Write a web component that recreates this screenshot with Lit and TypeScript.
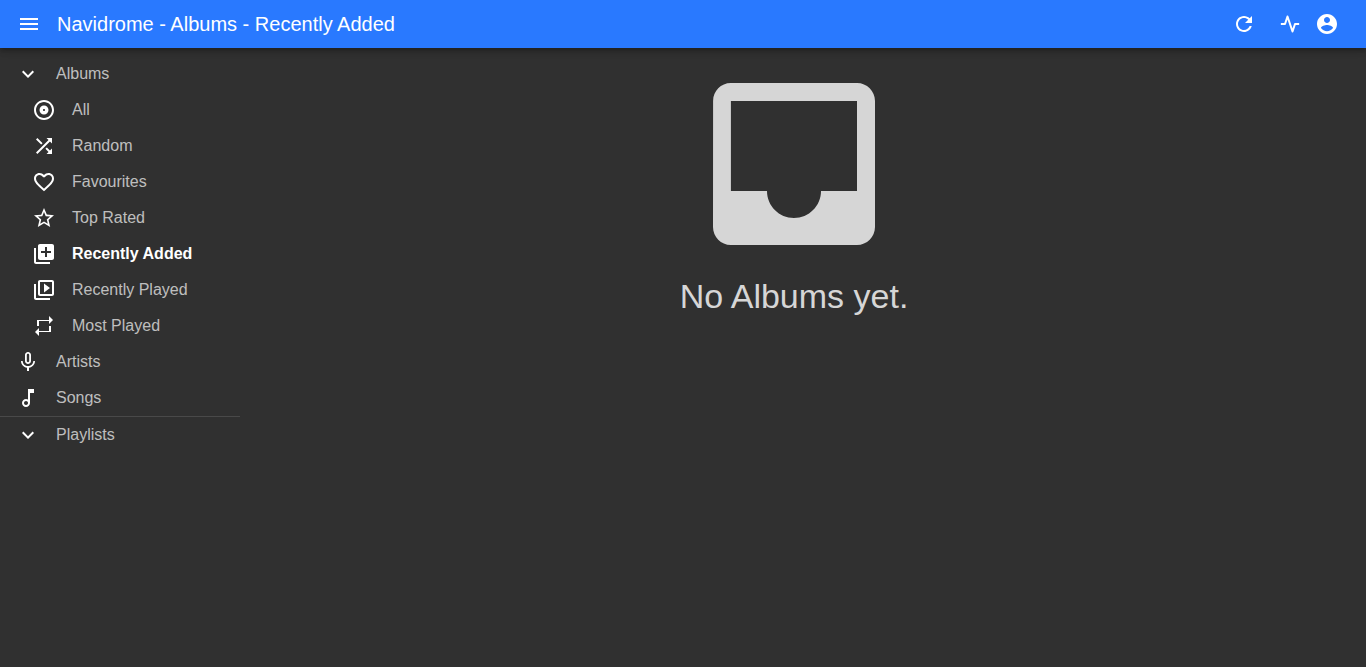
import { LitElement, html, css, svg } from "lit";
import { customElement, state } from "lit/decorators.js";
import { classMap } from "lit/directives/class-map.js";

const paths: Record<string, string> = {
  menu: "M3 18h18v-2H3v2zm0-5h18v-2H3v2zm0-7v2h18V6H3z",
  refresh:
    "M17.65 6.35C16.2 4.9 14.21 4 12 4c-4.42 0-7.99 3.58-7.99 8s3.57 8 7.99 8c3.73 0 6.84-2.55 7.73-6h-2.08c-.82 2.33-3.04 4-5.65 4-3.31 0-6-2.69-6-6s2.69-6 6-6c1.66 0 3.14.69 4.22 1.78L13 11h7V4l-2.35 2.35z",
  account:
    "M12 2C6.48 2 2 6.48 2 12s4.48 10 10 10 10-4.48 10-10S17.52 2 12 2zm0 3c1.66 0 3 1.34 3 3s-1.34 3-3 3-3-1.34-3-3 1.34-3 3-3zm0 14.2c-2.5 0-4.71-1.28-6-3.22.03-1.99 4-3.08 6-3.08 1.99 0 5.97 1.09 6 3.08-1.29 1.94-3.5 3.22-6 3.22z",
  expand: "M16.59 8.59L12 13.17 7.41 8.59 6 10l6 6 6-6z",
  album:
    "M12 2C6.48 2 2 6.48 2 12s4.48 10 10 10 10-4.48 10-10S17.52 2 12 2zm0 18c-4.41 0-8-3.59-8-8s3.59-8 8-8 8 3.59 8 8-3.59 8-8 8zm0-12.5c-2.49 0-4.5 2.01-4.5 4.5s2.01 4.5 4.5 4.5 4.5-2.01 4.5-4.5-2.01-4.5-4.5-4.5zm0 5.5c-.55 0-1-.45-1-1s.45-1 1-1 1 .45 1 1-.45 1-1 1z",
  shuffle:
    "M10.59 9.17L5.41 4 4 5.41l5.17 5.17 1.42-1.41zM14.5 4l2.04 2.04L4 18.59 5.41 20 17.96 7.46 20 9.5V4h-5.5zm.33 9.41l-1.41 1.41 3.13 3.13L14.5 20H20v-5.5l-2.04 2.04-3.13-3.13z",
  heart:
    "M16.5 3c-1.74 0-3.41.81-4.5 2.09C10.91 3.81 9.24 3 7.5 3 4.42 3 2 5.42 2 8.5c0 3.78 3.4 6.86 8.55 11.54L12 21.35l1.45-1.32C18.6 15.36 22 12.28 22 8.5 22 5.42 19.58 3 16.5 3zm-4.4 15.55l-.1.1-.1-.1C7.14 14.24 4 11.39 4 8.5 4 6.5 5.5 5 7.5 5c1.54 0 3.04.99 3.57 2.36h1.87C13.46 5.99 14.96 5 16.5 5c2 0 3.5 1.5 3.5 3.5 0 2.89-3.14 5.74-7.9 10.05z",
  star: "M22 9.24l-7.19-.62L12 2 9.19 8.63 2 9.24l5.46 4.73L5.82 21 12 17.27 18.18 21l-1.63-7.03L22 9.24zM12 15.4l-3.76 2.27 1-4.28-3.32-2.88 4.38-.38L12 6.1l1.71 4.04 4.38.38-3.32 2.88 1 4.28L12 15.4z",
  added:
    "M4 6H2v14c0 1.1.9 2 2 2h14v-2H4V6zm16-4H8c-1.1 0-2 .9-2 2v12c0 1.1.9 2 2 2h12c1.1 0 2-.9 2-2V4c0-1.1-.9-2-2-2zm-1 9h-4v4h-2v-4H9V9h4V5h2v4h4v2z",
  played:
    "M4 6H2v14c0 1.1.9 2 2 2h14v-2H4V6zm16-4H8c-1.1 0-2 .9-2 2v12c0 1.1.9 2 2 2h12c1.1 0 2-.9 2-2V4c0-1.1-.9-2-2-2zm0 14H8V4h12v12zM12 5.5v9l6-4.5z",
  repeat: "M7 7h10v3l4-4-4-4v4H5v6h2V7zm10 10H7v-3l-4 4 4 4v-4h12v-6h-2v5z",
  mic: "M12 14c1.66 0 2.99-1.34 2.99-3L15 5c0-1.66-1.34-3-3-3S9 3.34 9 5v6c0 1.66 1.34 3 3 3zm-1.2-9.1c0-.66.54-1.2 1.2-1.2.66 0 1.2.54 1.2 1.2l-.01 6.2c0 .66-.53 1.2-1.19 1.2-.66 0-1.2-.54-1.2-1.2V4.9zm6.5 6.1c0 3-2.54 5.1-5.3 5.1S6.7 14 6.7 11H5c0 3.41 2.72 6.23 6 6.72V21h2v-3.28c3.28-.48 6-3.3 6-6.72h-1.7z",
  note: "M12 3l.01 10.55c-.59-.34-1.27-.55-2-.55C7.79 13 6 14.79 6 17s1.79 4 4.01 4S14 19.21 14 17V7h4V3h-6zm-1.99 16c-1.1 0-2-.9-2-2s.9-2 2-2 2 .9 2 2-.9 2-2 2z",
  inbox:
    "M19 3H4.99c-1.11 0-1.98.89-1.98 2L3 19c0 1.1.88 2 1.99 2H19c1.1 0 2-.9 2-2V5c0-1.11-.9-2-2-2zm0 12h-4c0 1.66-1.35 3-3 3s-3-1.34-3-3H4.99V5H19v10z",
};

const icon = (name: string, cls = "icon") => html`
  <svg class=${cls} viewBox="0 0 24 24" aria-hidden="true">${svg`<path d=${paths[name]}></path>`}</svg>
`;

interface Entry {
  label: string;
  icon: string;
}

const albumLists: Entry[] = [
  { label: "All", icon: "album" },
  { label: "Random", icon: "shuffle" },
  { label: "Favourites", icon: "heart" },
  { label: "Top Rated", icon: "star" },
  { label: "Recently Added", icon: "added" },
  { label: "Recently Played", icon: "played" },
  { label: "Most Played", icon: "repeat" },
];

const libraries: Entry[] = [
  { label: "Artists", icon: "mic" },
  { label: "Songs", icon: "note" },
];

@customElement("app-root")
export class AppRoot extends LitElement {
  @state() private current = "Recently Added";
  @state() private albumsOpen = true;

  static styles = css`
    :host {
      display: flex;
      flex-direction: column;
      min-height: 100vh;
      background: #303030;
      color: #fff;
      font-family: "Liberation Sans", Arial, sans-serif;
      font-size: 16px;
      line-height: 24px;
    }
    button {
      margin: 0;
      border: 0;
      background: none;
      color: inherit;
      font: inherit;
      text-align: left;
      cursor: pointer;
    }
    .icon {
      display: block;
      flex: none;
      width: 24px;
      height: 24px;
      fill: currentColor;
    }
    .bar {
      position: relative;
      display: flex;
      align-items: center;
      height: 48px;
      padding: 0 24px 0 14px;
      background: #2979ff;
      box-shadow:
        0 2px 4px -1px rgba(0, 0, 0, 0.2),
        0 4px 5px 0 rgba(0, 0, 0, 0.14),
        0 1px 10px 0 rgba(0, 0, 0, 0.12);
    }
    .tool {
      padding: 3px;
    }
    .title {
      flex: 1;
      margin: 0 0 0 13px;
      font-size: 20px;
      font-weight: 400;
      line-height: 32px;
    }
    .tools {
      display: flex;
      align-items: center;
    }
    .refresh {
      margin-right: 18px;
    }
    .account {
      margin-left: 9px;
    }
    .activity {
      display: block;
      width: 20px;
      height: 20px;
      fill: none;
      stroke: currentColor;
      stroke-width: 2.4;
    }
    .body {
      display: flex;
      flex: 1;
    }
    .side {
      flex: none;
      width: 240px;
      padding-top: 8px;
    }
    .list {
      margin: 0;
      padding: 0;
      list-style: none;
    }
    .row {
      box-sizing: border-box;
      display: flex;
      align-items: center;
      gap: 16px;
      width: 100%;
      height: 36px;
      padding: 0 16px;
      color: #fff;
      text-decoration: none;
    }
    .nested {
      padding-left: 32px;
    }
    .label {
      color: rgba(255, 255, 255, 0.7);
    }
    .active .label {
      color: #fff;
      font-weight: 700;
    }
    .divider {
      height: 1px;
      margin: 0;
      border: 0;
      background: rgba(255, 255, 255, 0.12);
    }
    .empty {
      display: flex;
      flex: 1;
      flex-direction: column;
      align-items: center;
      margin-right: 18px;
      padding-top: 8px;
      color: #d6d6d6;
    }
    .inbox {
      display: block;
      width: 216px;
      height: 216px;
      fill: currentColor;
    }
    .message {
      margin: 0;
      font-size: 34px;
      font-weight: 400;
      line-height: 48px;
    }
  `;

  private link(entry: Entry, nested: boolean) {
    const active = entry.label === this.current;
    return html`<li>
      <a
        class=${classMap({ row: true, nested, active })}
        href="#"
        aria-current=${active ? "page" : "false"}
        @click=${(e: Event) => {
          e.preventDefault();
          this.current = entry.label;
        }}
        >${icon(entry.icon)}<span class="label">${entry.label}</span></a
      >
    </li>`;
  }

  render() {
    return html`
      <header class="bar">
        <button class="tool" aria-label="Toggle menu">${icon("menu")}</button>
        <h1 class="title">Navidrome - Albums - Recently Added</h1>
        <div class="tools">
          <button class="tool refresh" aria-label="Refresh">${icon("refresh")}</button>
          <button class="tool" aria-label="Activity">
            <svg class="activity" viewBox="0 0 24 24" stroke-linejoin="round">
              <polyline points="23 12 18 12 15 21 9 3 6 12 1 12"></polyline>
            </svg>
          </button>
          <button class="tool account" aria-label="Profile">${icon("account")}</button>
        </div>
      </header>
      <div class="body">
        <nav class="side" aria-label="Library">
          <button
            class="row"
            aria-expanded=${this.albumsOpen}
            @click=${() => (this.albumsOpen = !this.albumsOpen)}
          >
            ${icon("expand")}<span class="label">Albums</span>
          </button>
          ${this.albumsOpen
            ? html`<ul class="list">${albumLists.map((e) => this.link(e, true))}</ul>`
            : null}
          <ul class="list">${libraries.map((e) => this.link(e, false))}</ul>
          <hr class="divider" />
          <button class="row" aria-expanded="false">
            ${icon("expand")}<span class="label">Playlists</span>
          </button>
        </nav>
        <main class="empty">
          ${icon("inbox", "inbox")}
          <p class="message">No Albums yet.</p>
        </main>
      </div>
    `;
  }
}
